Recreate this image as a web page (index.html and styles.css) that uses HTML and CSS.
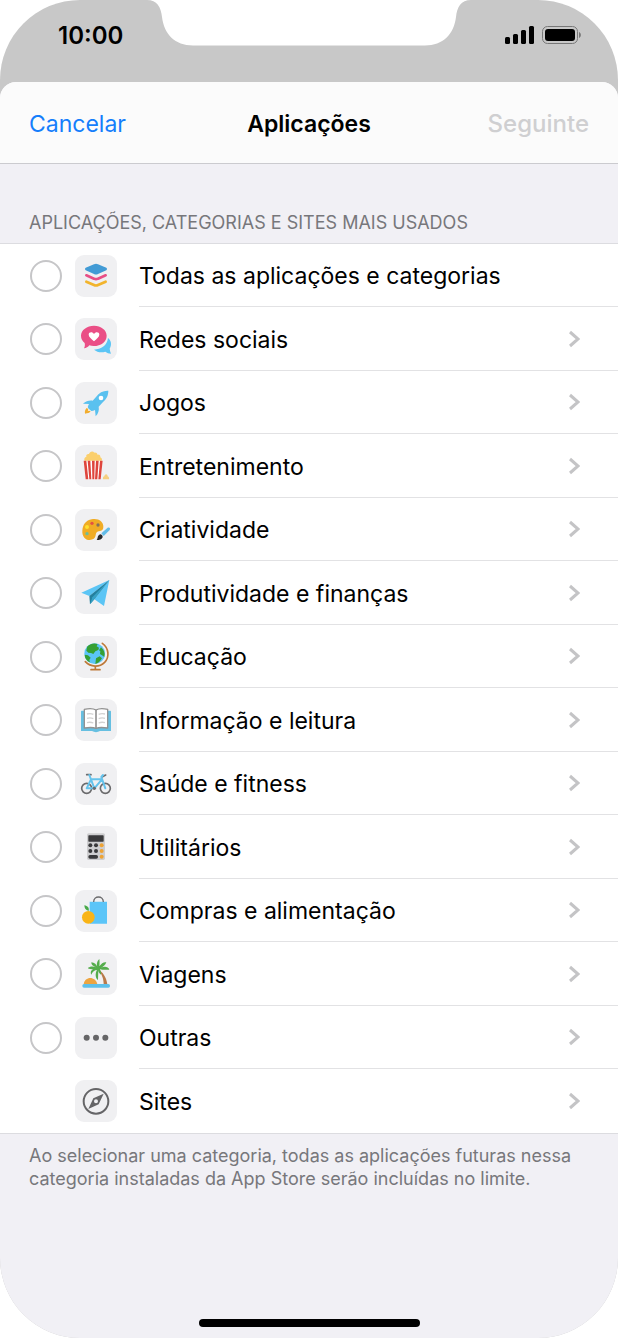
FILE: index.html
```html
<!DOCTYPE html>
<html lang="pt">
<head>
    <meta charset="UTF-8">
    <meta name="viewport" content="width=device-width, initial-scale=1.0">
    <title>Aplicações</title>
    <link rel="stylesheet" href="styles.css">
</head>
<body>
    <div class="phone">
        <div class="status">
            <span class="time">10:00</span>
            <svg class="notch" viewBox="0 0 324 46" aria-hidden="true">
                <path fill="#fff" d="M0 0C10 0 14 7 15 17C17 34 28 45.500 46 45.500H278C296 45.500 307 34 309 17C310 7 314 0 324 0Z"/>
            </svg>
            <svg class="signal" viewBox="0 0 78 20" aria-hidden="true">
                <rect x="0" y="12" width="5" height="7" rx="1.500"/>
                <rect x="8" y="9" width="5" height="10" rx="1.500"/>
                <rect x="16" y="5" width="5" height="14" rx="1.500"/>
                <rect x="24" y="1" width="5" height="18" rx="1.500"/>
                <rect x="37.500" y="1.500" width="35" height="17" rx="5" fill="none" stroke="#777"/>
                <rect x="40" y="4" width="30" height="12" rx="3"/>
                <path fill="#777" d="M74 7c2.500 1 2.500 5 0 6z"/>
            </svg>
        </div>

        <div class="sheet">
            <header class="header">
                <button class="cancel">Cancelar</button>
                <h1>Aplicações</h1>
                <button class="next" disabled>Seguinte</button>
            </header>

            <h2>APLICAÇÕES, CATEGORIAS E SITES MAIS USADOS</h2>

            <ul class="list">
                <li>
                    <input type="checkbox" id="todas">
                    <svg class="icon" viewBox="0 0 126 126" aria-hidden="true">
                        <path fill="#429bd5" d="M32 38L57 28Q63 25 69 28L94 38Q99 42 94 46L69 57Q63 60 57 57L32 46Q27 42 32 38Z"/>
                        <path fill="none" stroke="#e84f86" stroke-width="8" stroke-linecap="round" stroke-linejoin="round" d="M34 61L57 71Q63 74 69 71L92 61"/>
                        <path fill="none" stroke="#f2b42c" stroke-width="8" stroke-linecap="round" stroke-linejoin="round" d="M34 80L57 90Q63 93 69 90L92 80"/>
                    </svg>
                    <label for="todas">Todas as aplicações e categorias</label>
                </li>
                <li>
                    <input type="checkbox" id="redes">
                    <svg class="icon" viewBox="0 0 126 126" aria-hidden="true">
                        <path fill="#5bc5f5" d="M57 95C79 93 96 83 99 60C109 68 111 80 104 92C105 98 106 103 108 107C101 107 96 104 91 101C78 105 66 102 57 95Z"/>
                        <path fill="#ea4f86" d="M57 23C78 23 95 36 95 53C95 71 78 84 56 84C51 84 47 83 43 82C39 87 34 90 27 91C30 86 30 80 29 75C22 69 18 62 18 53C18 36 36 23 57 23Z"/>
                        <path fill="#fff" d="M57 70C50 63 41 57 41 50C41 42 52 40 57 48C62 40 73 42 73 50C73 57 64 63 57 70Z"/>
                    </svg>
                    <label for="redes">Redes sociais</label>
                    <button class="more" aria-label="Abrir Redes sociais"><svg viewBox="0 0 12 18"><path d="M2 2l8 7-8 7"/></svg></button>
                </li>
                <li>
                    <input type="checkbox" id="jogos">
                    <svg class="icon" viewBox="0 0 126 126" aria-hidden="true">
                        <path fill="#5ac1ef" d="M100 26C85 25 73 31 63 45L53 56C43 54 33 58 24 65L42 66C39 71 38 75 39 77C39 78 48 87 50 87C53 87 56 86 60 84L62 103C70 95 73 84 71 74L82 62C95 51 100 40 100 26Z"/>
                        <circle cx="78" cy="48" r="7" fill="#fff"/>
                        <path fill="#f2ad2e" d="M36 77C30 81 29 88 30 95C38 94 44 93 47 88L42 86L38 88L40 83Z"/>
                    </svg>
                    <label for="jogos">Jogos</label>
                    <button class="more" aria-label="Abrir Jogos"><svg viewBox="0 0 12 18"><path d="M2 2l8 7-8 7"/></svg></button>
                </li>
                <li>
                    <input type="checkbox" id="entretenimento">
                    <svg class="icon" viewBox="0 0 126 126" aria-hidden="true">
                        <path fill="#fbcf6c" d="M29 48C26 42 29 36 34 36C32 30 37 26 42 27C44 19 54 17 58 23C63 22 67 25 67 29C73 28 77 32 76 37C81 39 82 44 80 48Z"/>
                        <path fill="#fff" d="M26 47H83L77 103H32Z"/>
                        <path fill="#de453d" d="M26 47H34L40 103H32ZM38 47H46L49 103H43ZM51 47H59L58 103H52ZM63 47H71L67 103H60ZM75 47H83L77 103H70Z"/>
                        <path fill="#f5cf80" d="M84 103C83 98 85 94 88 94C89 86 98 86 98 94C102 95 103 99 102 103Z"/>
                    </svg>
                    <label for="entretenimento">Entretenimento</label>
                    <button class="more" aria-label="Abrir Entretenimento"><svg viewBox="0 0 12 18"><path d="M2 2l8 7-8 7"/></svg></button>
                </li>
                <li>
                    <input type="checkbox" id="criatividade">
                    <svg class="icon" viewBox="0 0 126 126" aria-hidden="true">
                        <path fill="#f0ac25" d="M50 31C70 27 86 38 85 54C85 61 82 65 75 66C64 67 63 72 62 79C61 88 54 93 44 93C30 93 21 81 22 65C23 47 33 34 50 31Z"/>
                        <circle cx="51" cy="43" r="5" fill="#e45142"/>
                        <circle cx="69" cy="48" r="5" fill="#82705b"/>
                        <circle cx="36" cy="54" r="6" fill="#ffe12e"/>
                        <circle cx="36" cy="74" r="5" fill="#6cbc9c"/>
                        <path fill="#62bce8" d="M79 73L97 57C102 53 108 58 104 63L86 81Z"/>
                        <path fill="#292a2c" d="M77 76C83 78 85 84 81 88C77 93 71 94 65 92C69 89 67 86 69 82C71 78 74 76 77 76Z"/>
                    </svg>
                    <label for="criatividade">Criatividade</label>
                    <button class="more" aria-label="Abrir Criatividade"><svg viewBox="0 0 12 18"><path d="M2 2l8 7-8 7"/></svg></button>
                </li>
                <li>
                    <input type="checkbox" id="produtividade">
                    <svg class="icon" viewBox="0 0 126 126" aria-hidden="true">
                        <path fill="#5bc5f5" d="M103 24L19 62L43 72L103 24L58 82L87 102Z"/>
                        <path fill="#237f9e" d="M103 24L43 72L45 97L58 82Z"/>
                        <path fill="#36a1c5" d="M103 24L52 76L45 97L58 82Z"/>
                    </svg>
                    <label for="produtividade">Produtividade e finanças</label>
                    <button class="more" aria-label="Abrir Produtividade e finanças"><svg viewBox="0 0 12 18"><path d="M2 2l8 7-8 7"/></svg></button>
                </li>
                <li>
                    <input type="checkbox" id="educacao">
                    <svg class="icon" viewBox="0 0 126 126" aria-hidden="true">
                        <circle cx="59" cy="53" r="31" fill="#5bc5f8"/>
                        <path fill="#36a034" d="M36 33C43 23 57 20 68 24L65 31L72 35L70 42L61 46L55 54L48 51L40 50L34 44ZM29 56L39 58L47 65L43 72L45 79C35 75 29 66 29 56ZM78 34C87 42 91 51 88 63L81 58L75 54L76 46L72 43ZM63 67L74 61L81 67C76 76 69 82 61 84Z"/>
                        <path fill="none" stroke="#bd7939" stroke-width="5" stroke-linecap="round" d="M82 22C102 36 104 64 89 79C73 95 47 94 31 77M61 91V101M48 101H75"/>
                    </svg>
                    <label for="educacao">Educação</label>
                    <button class="more" aria-label="Abrir Educação"><svg viewBox="0 0 12 18"><path d="M2 2l8 7-8 7"/></svg></button>
                </li>
                <li>
                    <input type="checkbox" id="informacao">
                    <svg class="icon" viewBox="0 0 126 126" aria-hidden="true">
                        <path fill="#66bfe1" d="M20 35H106Q108 35 108 38V96H75Q63 103 51 96H18V38Q18 35 20 35Z"/>
                        <path fill="#fff" stroke="#929292" stroke-width="4" stroke-linejoin="round" d="M63 33C53 27 41 28 28 31V87C42 85 53 84 63 88C73 84 84 85 98 87V31C85 28 73 27 63 33Z"/>
                        <path stroke="#929292" stroke-width="5" d="M63 32V89"/>
                        <path fill="none" stroke="#d2d2d2" stroke-width="4" d="M36 45Q46 42 55 46M36 58Q46 55 55 59M36 71Q46 68 55 72M71 46Q80 42 90 45M71 59Q80 55 90 58M71 72Q80 68 90 71"/>
                    </svg>
                    <label for="informacao">Informação e leitura</label>
                    <button class="more" aria-label="Abrir Informação e leitura"><svg viewBox="0 0 12 18"><path d="M2 2l8 7-8 7"/></svg></button>
                </li>
                <li>
                    <input type="checkbox" id="saude">
                    <svg class="icon" viewBox="0 0 126 126" aria-hidden="true">
                        <g fill="none" stroke-linecap="round" stroke-linejoin="round">
                            <g stroke="#6b6b6d" stroke-width="5">
                                <circle cx="35" cy="76" r="15"/>
                                <circle cx="91" cy="76" r="15"/>
                                <path d="M35 35H48M81 42L92 36"/>
                            </g>
                            <path stroke="#65c3ec" stroke-width="6" d="M43 36L58 76H35L48 49H81L58 76M79 42L91 76M79 42L84 36"/>
                        </g>
                        <circle cx="58" cy="76" r="5" fill="#6b6b6d"/>
                    </svg>
                    <label for="saude">Saúde e fitness</label>
                    <button class="more" aria-label="Abrir Saúde e fitness"><svg viewBox="0 0 12 18"><path d="M2 2l8 7-8 7"/></svg></button>
                </li>
                <li>
                    <input type="checkbox" id="utilitarios">
                    <svg class="icon" viewBox="0 0 126 126" aria-hidden="true">
                        <rect x="36" y="22" width="54" height="80" rx="5" fill="#ceced0"/>
                        <rect x="40" y="28" width="46" height="19" rx="2" fill="#39393b"/>
                        <g fill="#39393b">
                            <circle cx="46" cy="58" r="6"/>
                            <circle cx="63" cy="58" r="6"/>
                            <circle cx="46" cy="75" r="6"/>
                            <circle cx="63" cy="75" r="6"/>
                            <rect x="40" y="87" width="29" height="11" rx="5"/>
                        </g>
                        <g fill="#eda334">
                            <circle cx="80" cy="58" r="6"/>
                            <circle cx="80" cy="75" r="6"/>
                            <circle cx="80" cy="92" r="6"/>
                        </g>
                    </svg>
                    <label for="utilitarios">Utilitários</label>
                    <button class="more" aria-label="Abrir Utilitários"><svg viewBox="0 0 12 18"><path d="M2 2l8 7-8 7"/></svg></button>
                </li>
                <li>
                    <input type="checkbox" id="compras">
                    <svg class="icon" viewBox="0 0 126 126" aria-hidden="true">
                        <path fill="#5bc5f8" d="M44 35H96V101H44Z"/>
                        <path fill="none" stroke="#6b6b6d" stroke-width="4" d="M56 36C56 16 85 16 85 36"/>
                        <circle cx="40" cy="82" r="19" fill="#f9b416"/>
                        <path fill="#49a949" d="M41 63C31 60 28 54 28 46C38 48 43 53 41 63Z"/>
                    </svg>
                    <label for="compras">Compras e alimentação</label>
                    <button class="more" aria-label="Abrir Compras e alimentação"><svg viewBox="0 0 12 18"><path d="M2 2l8 7-8 7"/></svg></button>
                </li>
                <li>
                    <input type="checkbox" id="viagens">
                    <svg class="icon" viewBox="0 0 126 126" aria-hidden="true">
                        <path fill="#eda541" d="M26 94C29 69 62 69 67 94Z"/>
                        <path fill="#b87a4a" d="M68 49C84 57 94 73 97 94H86C86 75 79 61 68 49Z"/>
                        <path fill="#55ad4c" d="M69 46C63 36 65 26 73 18C74 26 74 34 73 40C79 31 87 26 94 28C91 37 84 41 77 45C88 39 100 41 103 50C92 51 82 51 75 48C77 54 79 59 78 65C72 61 70 56 70 51L69 81C61 76 60 61 66 51C59 51 52 56 49 65C45 58 49 51 55 49C49 48 42 49 38 45C45 39 55 39 63 43C54 40 48 35 49 28C58 28 65 35 69 46Z"/>
                        <rect x="22" y="93" width="83" height="11" rx="5" fill="#5dc0eb"/>
                    </svg>
                    <label for="viagens">Viagens</label>
                    <button class="more" aria-label="Abrir Viagens"><svg viewBox="0 0 12 18"><path d="M2 2l8 7-8 7"/></svg></button>
                </li>
                <li>
                    <input type="checkbox" id="outras">
                    <svg class="icon" viewBox="0 0 126 126" aria-hidden="true">
                        <g fill="#656567">
                            <circle cx="35" cy="62" r="9"/>
                            <circle cx="63" cy="62" r="9"/>
                            <circle cx="91" cy="62" r="9"/>
                        </g>
                    </svg>
                    <label for="outras">Outras</label>
                    <button class="more" aria-label="Abrir Outras"><svg viewBox="0 0 12 18"><path d="M2 2l8 7-8 7"/></svg></button>
                </li>
                <li class="sites">
                    <svg class="icon" viewBox="0 0 126 126" aria-hidden="true">
                        <circle cx="63" cy="64" r="37" fill="none" stroke="#656567" stroke-width="6"/>
                        <path fill="#656567" fill-rule="evenodd" d="M86 41L71 73L40 87L55 55ZM63 58A6 6 0 1 0 63 70A6 6 0 1 0 63 58Z"/>
                    </svg>
                    <span class="name">Sites</span>
                    <button class="more" aria-label="Abrir Sites"><svg viewBox="0 0 12 18"><path d="M2 2l8 7-8 7"/></svg></button>
                </li>
            </ul>

            <p class="note">Ao selecionar uma categoria, todas as aplicações futuras nessa categoria instaladas da App Store serão incluídas no limite.</p>

            <div class="home"></div>
        </div>
    </div>
</body>
</html>
```
FILE: styles.css
```css
* {
    box-sizing: border-box;
}

body {
    margin: 0;
    background-color: #fff;
    font-family: Inter, "Liberation Sans", sans-serif;
    color: #000;
}

button {
    padding: 0;
    border: none;
    background: none;
    font-family: inherit;
    cursor: pointer;
}

.phone {
    display: flex;
    flex-direction: column;
    min-height: 100vh;
    background-color: #c8c8c8;
    border-radius: 80px;
    overflow: hidden;
}

/* status bar */
.status {
    display: grid;
    grid-template-columns: 1fr 324px 1fr;
    height: 82px;
}

.time {
    padding: 21px 0 0 58px;
    font-size: 24px;
    line-height: 30px;
    font-weight: 600;
    white-space: nowrap;
}

.notch {
    width: 324px;
    height: 46px;
}

.signal {
    width: 78px;
    height: 20px;
    margin: 25px 0 0 34px;
}

/* sheet */
.sheet {
    display: flex;
    flex-direction: column;
    flex: 1;
    background-color: #f1f0f5;
    border-radius: 16px 16px 0 0;
    overflow: hidden;
}

.header {
    display: grid;
    grid-template-columns: 1fr auto 1fr;
    align-items: center;
    height: 82px;
    padding: 2px 29px 0;
    background-color: #fbfbfb;
    border-bottom: 1px solid #cbcbcf;
}

.header h1 {
    margin: 0;
    font-size: 23px;
    font-weight: 600;
}

.header button {
    font-size: 23px;
}

.cancel {
    justify-self: start;
    color: #157efb;
}

.header .next {
    justify-self: end;
    color: #cfcfd1;
    font-size: 24px;
    font-weight: 500;
}

h2 {
    margin: 0;
    padding: 47px 29px 8px;
    font-size: 18px;
    line-height: 24px;
    font-weight: 400;
    color: #77777b;
}

/* list */
.list {
    margin: 0;
    padding: 0;
    list-style: none;
    background-color: #fff;
    border-top: 1px solid #dcdce0;
    border-bottom: 1px solid #dcdce0;
}

.list li {
    display: flex;
    align-items: center;
    height: 63px;
    padding-left: 30px;
}

.list li:nth-child(even) {
    height: 64px;
}

.list input {
    appearance: none;
    flex: none;
    width: 32px;
    height: 32px;
    margin: 0 13px 0 0;
    border: 2px solid #c6c6c8;
    border-radius: 50%;
}

.list input:checked {
    background-color: #157efb;
    border-color: #157efb;
}

.icon {
    flex: none;
    width: 42px;
    height: 42px;
    margin-right: 22px;
    background-color: #f0f0f2;
    border-radius: 9px;
}

.list .sites {
    padding-left: 75px;
}

.list label,
.name {
    display: flex;
    flex: 1;
    align-items: center;
    align-self: stretch;
    padding-top: 2px;
    font-size: 23px;
    border-bottom: 1px solid #e2e2e4;
}

.list .name {
    border-bottom: none;
}

.more {
    display: flex;
    align-items: center;
    align-self: stretch;
    padding-right: 38px;
    border-bottom: 1px solid #e2e2e4;
}

.sites .more {
    border-bottom: none;
}

.more svg {
    width: 12px;
    height: 18px;
    fill: none;
    stroke: #c4c4c6;
    stroke-width: 3;
}

.note {
    margin: 0;
    padding: 10px 29px;
    font-size: 18px;
    line-height: 23px;
    color: #77777b;
}

.home {
    width: 221px;
    height: 8px;
    margin: auto auto 11px;
    background-color: #000;
    border-radius: 4px;
}
```
